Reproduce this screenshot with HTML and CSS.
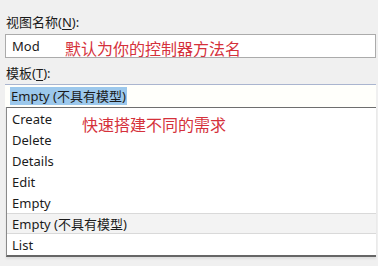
FILE: index.html
```html
<!DOCTYPE html>
<html>
<head>
<meta charset="utf-8">
<link rel="stylesheet" href="styles.css">
</head>
<body>
<div class="panel">
  <div class="label label-first">视图名称(<u>N</u>):</div>
  <div class="textbox">
    <span class="value">Mod</span>
    <span class="note note-inline">默认为你的控制器方法名</span>
  </div>
  <div class="label label-second">模板(<u>T</u>):</div>
  <div class="combo"><span class="sel">Empty (不具有模型)</span></div>
  <div class="list">
    <div class="item">Create</div>
    <div class="item">Delete</div>
    <div class="item">Details</div>
    <div class="item">Edit</div>
    <div class="item">Empty</div>
    <div class="item item-hover">Empty (不具有模型)</div>
    <div class="item">List</div>
    <span class="note note-list">快速搭建不同的需求</span>
  </div>
</div>
</body>
</html>
```
FILE: styles.css
```css
html, body {
  margin: 0;
  padding: 0;
  background: #f0f0f0;
}
body {
  width: 378px;
  height: 266px;
  overflow: hidden;
  font-family: "Segoe UI", "Noto Sans", "Noto Sans CJK SC", sans-serif;
  font-size: 13px;
  color: #1b1b1b;
}
.panel {
  padding-left: 5px;
  width: 371px;
}
.label {
  height: 18px;
  line-height: 18px;
  padding-left: 1px;
}
.label u {
  text-decoration: underline;
  text-underline-offset: 2px;
}
.label-first {
  margin-top: 13px;
  margin-bottom: 3px;
}
.label-second {
  margin-top: 6px;
  margin-bottom: 2px;
}
.textbox {
  box-sizing: border-box;
  height: 24px;
  background: #ffffff;
  border: 1px solid #ababab;
  display: flex;
  align-items: center;
  padding-left: 6px;
}
.value {
  width: 53px;
}
.note {
  color: #d5313b;
  font-family: "Noto Sans CJK SC", sans-serif;
  font-size: 16px;
  line-height: 20px;
}
.note-inline {
  margin-top: 4px;
}
.combo {
  box-sizing: border-box;
  height: 23px;
  background: #fffffb;
  border-top: 1px solid #aab5cf;
  padding: 2px 0 0 5px;
}
.sel {
  display: inline-block;
  height: 18px;
  line-height: 18px;
  background: #9cc8ec;
  padding: 0 1px;
}
.list {
  position: relative;
  box-sizing: border-box;
  margin-left: 1px;
  background: #ffffff;
  border-top: 1px solid #6e6e6e;
  border-left: 1px solid #8a8a8a;
  border-bottom: 2px solid #666666;
  box-shadow: 0 2px 2px rgba(0,0,0,0.08);
}
.item {
  box-sizing: border-box;
  height: 21px;
  padding-top: 2px;
  line-height: 19px;
  padding-left: 5px;
}
.item-hover {
  background: #f3f3f3;
  border-top: 1px solid #d9d9d9;
  border-bottom: 1px solid #d9d9d9;
  padding-top: 1px;
  line-height: 18px;
}
.note-list {
  position: absolute;
  left: 75px;
  top: 6px;
}
```
